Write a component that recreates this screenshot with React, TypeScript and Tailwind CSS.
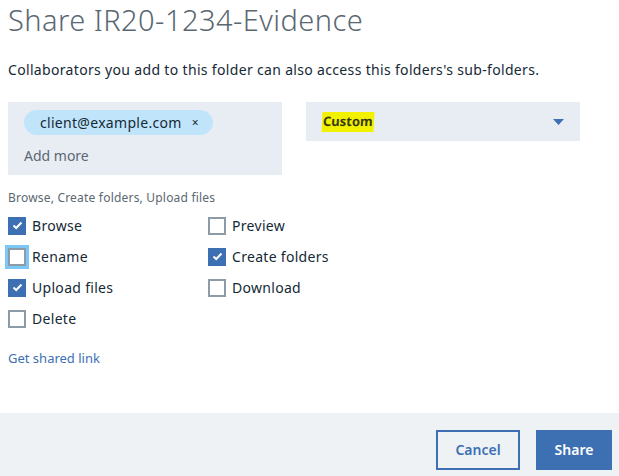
import { useState } from "react";

const perms = [
  ["Browse", true, "Preview", false],
  ["Rename", false, "Create folders", true],
  ["Upload files", true, "Download", false],
  ["Delete", false, null, false],
] as const;

const Box = ({ checked, focus }: { checked: boolean; focus?: boolean }) => (
  <span
    className={
      "flex h-[18px] w-[18px] shrink-0 items-center justify-center " +
      (checked ? "bg-[#3d70b2]" : "border-2 border-[#8c9ba5] bg-white") +
      (focus ? " outline-[3px] outline-[#7cc7f5]" : "")
    }
  >
    {checked && (
      <svg width="11" height="9" viewBox="0 0 11 9">
        <path d="M1.5 4.5 L4.2 7 L9.5 1.5" stroke="white" strokeWidth="2" fill="none" />
      </svg>
    )}
  </span>
);

const Check = ({ label, checked, focus }: { label: string; checked: boolean; focus?: boolean }) => (
  <div className="flex h-[31px] items-center gap-[6px]">
    <Box checked={checked} focus={focus} />
    <span className="text-[14px] text-[#152935] tracking-[0.3px]">{label}</span>
  </div>
);

const App = () => {
  const [open] = useState(false);
  return (
    <div className="h-[476px] w-[619px] bg-white font-['Noto_Sans',sans-serif] flex flex-col">
      <div className="flex-1 px-2">
        <h1 className="pt-[2px] text-[29px] font-light leading-[36px] text-[#5a6872] tracking-[0.45px]">
          Share IR20-1234-Evidence
        </h1>
        <p className="mt-[22px] text-[14px] leading-[20px] text-[#152935] tracking-[0.33px]">
          Collaborators you add to this folder can also access this folders's sub-folders.
        </p>
        <div className="mt-[22px] flex gap-6">
          <div className="h-[73px] w-[274px] bg-[#e8edf4] px-4 pt-2">
            <span className="inline-flex h-[25px] w-[189px] items-center rounded-full bg-[#c0e5fb] pl-4 text-[14px] text-[#152935] tracking-[0.3px]">
              client@example.com
              <span className="ml-[10px] text-[12px]">×</span>
            </span>
            <div className="mt-[10px] text-[14px] text-[#5a6872]">Add more</div>
          </div>
          <div className="flex h-[39px] w-[274px] items-center justify-between bg-[#e8edf4] pl-4 pr-[16px]">
            <span className="bg-[#f2f200] px-[1px] text-[13px] font-bold text-[#3a3a10] -skew-x-3">Custom</span>
            <svg width="11" height="6" viewBox="0 0 11 6" className={open ? "rotate-180" : ""}>
              <path d="M0 0 H11 L5.5 6 Z" fill="#3d70b2" />
            </svg>
          </div>
        </div>
        <div className="mt-[14px] text-[12px] text-[#5a6872] tracking-[0.2px]">Browse, Create folders, Upload files</div>
        <div className="mt-[3px] flex flex-col">
          {perms.map(([a, ac, b, bc], i) => (
            <div key={i} className="flex">
              <div className="w-[200px]">
                <Check label={a} checked={ac} focus={a === "Rename"} />
              </div>
              {b && <Check label={b} checked={bc} />}
            </div>
          ))}
        </div>
        <div className="mt-[15px] text-[13px] text-[#3d70b2]">Get shared link</div>
      </div>
      <div className="flex h-[63px] items-center justify-end gap-4 bg-[#eef2f5] pr-[7px] pt-[10px]">
        <button className="h-[40px] w-[84px] border-2 border-[#3d70b2] text-[14px] font-semibold text-[#3d70b2]">
          Cancel
        </button>
        <button className="h-[40px] w-[76px] bg-[#3d70b2] text-[14px] font-semibold text-white">Share</button>
      </div>
    </div>
  );
};

export default App;
